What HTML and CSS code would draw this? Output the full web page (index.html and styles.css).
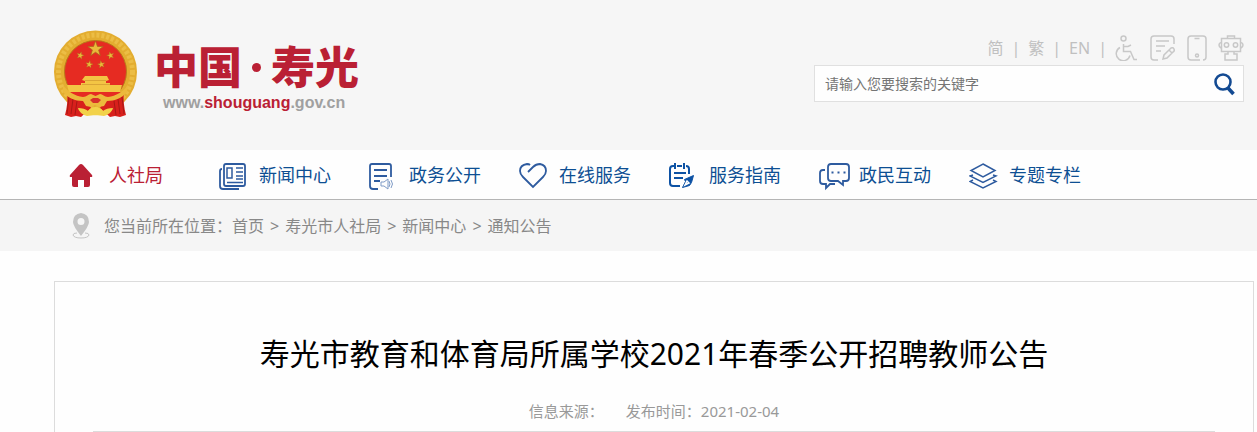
FILE: index.html
```
<!DOCTYPE html>
<html lang="zh-CN">
<head>
    <meta charset="UTF-8">
    <meta name="viewport" content="width=device-width, initial-scale=1.0">
    <title>寿光市教育和体育局所属学校2021年春季公开招聘教师公告</title>
    <link rel="stylesheet" href="styles.css">
</head>
<body>

<header class="header">
    <div class="container header-inner">
        <a href="#" class="logo">
            <svg class="emblem" viewBox="0 0 84 88" aria-hidden="true">
                <defs>
                    <path id="star" d="M0-9 2.2-2.8 8.6-2.8 3.5 1 5.3 7.3 0 3.6-5.3 7.3-3.5 1-8.6-2.8-2.2-2.8Z"/>
                </defs>
                <circle cx="41.5" cy="42" r="41.5" fill="#e3ad30"/>
                <circle cx="41.5" cy="42" r="37" fill="none" stroke="#ecbd45" stroke-width="5" stroke-dasharray="3 2"/>
                <circle cx="41.5" cy="41.5" r="31" fill="#e62b22" stroke="#b97a1a"/>
                <!-- stars -->
                <g fill="#e9b93a" stroke="#a8641c" stroke-width=".8">
                    <use href="#star" transform="translate(41.5 19) scale(.9)"/>
                    <use href="#star" transform="translate(26.3 25.5) rotate(15) scale(.44)"/>
                    <use href="#star" transform="translate(56.5 25.5) rotate(-15) scale(.44)"/>
                    <use href="#star" transform="translate(35.3 34.5) rotate(10) scale(.44)"/>
                    <use href="#star" transform="translate(47.3 34.5) rotate(-10) scale(.44)"/>
                </g>
                <!-- gate -->
                <path fill="#f3c544" d="M31 46h22l2 4-3 1v2h4v2h12l-2 7H15l-2-7h14v-2h4v-2l-3-1z"/>
                <path d="M31 50.5h21M28 54.500h28" stroke="#cf9630" stroke-width=".7"/>
                <path fill="#e62b22" d="M15 62h53l-9 9H24z"/>
                <!-- drapes -->
                <path fill="#d8201c" d="M13 61c6 5 12 8 20 9l4 8-10 9-5-1-5 1-6-2c2-7 3-15 2-24zM70 61c-6 5-12 8-20 9l-4 8 10 9 5-1 5 1 6-2c-2-7-3-15-2-24z"/>
                <path stroke="#9c1713" stroke-width=".8" fill="none" d="M15 67l-2 17M19 69l-2 15M23 71l-2 14M68 67l2 17M64 69l2 15M60 71l2 14"/>
                <!-- gear and wheat -->
                <path fill="#ecb93c" d="M9 55c5 7 12 11 20 12 4 0 5-3 8-3l4.500 2 4.500-2c3 0 4 3 8 3 8-1 15-5 20-12l-1 7c-5 6-12 9-20 9l-3 5-5 1-4-2-4 2-5-1-3-5c-8 0-15-3-20-9z"/>
                <path fill="#d6302a" d="M36 70l3-2h5l3 2-3 3h-5z"/>
                <path fill="#f2d24a" d="M24 78c4 0 8 1 10 3 2-3 5-4 7.500-4s5.500 1 7.500 4c2-2 6-3 10-3-1 4-5 7-9 8-5-1-12-1-17 0-4-1-8-4-9-8z"/>
            </svg>
            <span class="logo-text">
                <span class="logo-name">中国<i class="logo-dot"></i>寿光</span>
                <span class="logo-domain">www.<b>shouguang</b>.gov.cn</span>
            </span>
        </a>

        <div class="header-side">
            <div class="tools">
                <a href="#">简</a><span>|</span>
                <a href="#">繁</a><span>|</span>
                <a href="#">EN</a><span>|</span>
                <div class="tool-icons">
                    <a href="#" aria-label="无障碍">
                        <svg viewBox="0 0 24 26"><circle cx="8.5" cy="3.5" r="2.5"/><path d="M8.500 9v7.500h7l3.500 8h3M9 11.500h4l3-1.500M5 12.500a7 7 0 1 0 10 8"/></svg>
                    </a>
                    <a href="#" aria-label="意见征集">
                        <svg viewBox="0 0 26 26"><path d="M24 9V4q0-3-3-3H4Q1 1 1 4v18q0 3 3 3h4M6 6h13M6 11h9M6 16h5M13 24l1-4 7-7q2-1 3 1t-1 3l-6 6zM19 15l3 3"/></svg>
                    </a>
                    <a href="#" aria-label="手机版">
                        <svg viewBox="0 0 20 26"><path d="M13 25H4q-3 0-3-3V4q0-3 3-3h12q3 0 3 3v18q0 3-3 3M7.500 3.500h5"/><circle cx="10" cy="20.5" r="1.5"/></svg>
                    </a>
                    <a href="#" aria-label="智能问答">
                        <svg viewBox="0 0 26 26"><path d="M9.500 3.500V1h7v2.500M3.500 3.500h19v13h-19zM3 7.500Q1 8 1 10t2 3M23 7.500q2 .5 2 2.500t-2 3M10 17v2H7v6h12v-6h-3v-2"/><circle cx="8.500" cy="10" r="2.2"/><circle cx="17.500" cy="10" r="2.200"/></svg>
                    </a>
                </div>
            </div>
            <form class="search">
                <input type="text" aria-label="搜索" placeholder="请输入您要搜索的关键字">
                <button type="submit" aria-label="搜索">
                    <svg viewBox="0 0 22 24"><circle cx="9" cy="10" r="7.5" stroke-width="2.600"/><path d="M14 16l5.500 6" stroke-width="3.600"/></svg>
                </button>
            </form>
        </div>
    </div>
</header>

<nav class="nav">
    <div class="container nav-inner">
        <a href="#" class="nav-item active">
            <svg viewBox="0 0 32 28"><path fill="#ba2034" stroke="none" d="M12 1q1 0 2 1l9 10q1 2-1 2h-1v8q0 2-2 2h-4v-7H9v7H5q-2 0-2-2v-8H2q-2 0-1-2l9-10q1-1 2-1z"/></svg>
            <span>人社局</span>
        </a>
        <a href="#" class="nav-item">
            <svg viewBox="0 0 32 28"><path d="M5 3q0-2 2-2h17q2 0 2 2v18q0 2-2 2H7q-2 0-2-2zM3 6Q1 6 1 8v15q0 3 3 3h16"/><path stroke-width="1.500" d="M8 5h5v10H8zM17 5h7M17 9h7M17 13h7M17 16h7M8 19.500h16"/></svg>
            <span>新闻中心</span>
        </a>
        <a href="#" class="nav-item">
            <svg viewBox="0 0 32 28"><path d="M9 26H4q-3 0-3-3V3q0-2 2-2h17q2 0 2 2v11M5 7h13M5 13h13M5 18h6"/><path stroke="#7f9bc6" stroke-width="1" d="M12 19h3l4-3v10l-4-3h-3zM20 18q2 3 0 6M22 17q3 4 0 8"/></svg>
            <span>政务公开</span>
        </a>
        <a href="#" class="nav-item">
            <svg viewBox="0 0 32 28"><path d="M9 9l5-5q3-3 7-3 6 1 6 7 0 3-3 6L14 24 4 14Q1 11 1 8q0-6 7-7 2 0 3 1"/></svg>
            <span>在线服务</span>
        </a>
        <a href="#" class="nav-item">
            <svg viewBox="0 0 32 28"><g stroke="#0d52a4"><path stroke-width="2" d="M11 23H4q-3 0-3-3V6q0-3 3-3h1M8 3h5M17 3q3 0 3 3v5M6 0v6M15 0v6M5 10h12M5 15h9"/><path fill="#0d52a4" stroke-width="1" d="M24.500 12.500l-9 4 1 2-3 6 7-2 2-3z"/><path stroke="#fff" stroke-width="1.500" d="M16 22l2-4 2 2z"/></g></svg>
            <span>服务指南</span>
        </a>
        <a href="#" class="nav-item">
            <svg viewBox="0 0 32 28"><path d="M6 7H4Q1 7 1 10v8q0 3 3 3h3v4l4-4h5M12 1h15q3 0 3 3v11q0 3-3 3h-3v4l-5-4h-7q-3 0-3-3V4q0-3 3-3z"/><path d="M12.500 9.500h2M18.500 9.500h2M24.500 9.500h2"/></svg>
            <span>政民互动</span>
        </a>
        <a href="#" class="nav-item">
            <svg viewBox="0 0 32 28"><path stroke-width="1.500" d="M14 1l12 6.500-12 6.500L2 7.500zM4 12l-3 1 13 6.500L27 13l-3-1M4 17l-3 1.500L14 25l13-6.500-3-1.500"/></svg>
            <span>专题专栏</span>
        </a>
    </div>
</nav>

<div class="location">
    <div class="container location-inner">
        <svg viewBox="0 0 18 26" aria-hidden="true"><path fill="#c4c4c4" fill-rule="evenodd" d="M9 0q8 1 8 9 0 4-8 14Q1 13 1 9q0-8 8-9zm0 5a3.500 3.500 0 1 0 0 7 3.500 3.500 0 0 0 0-7z"/><path fill="none" stroke="#c4c4c4" d="M5 20q-4 0-4 2 1 3 8 3t8-3q0-2-4-2"/></svg>
        <p>您当前所在位置：<a href="#">首页</a><span>&gt;</span><a href="#">寿光市人社局</a><span>&gt;</span><a href="#">新闻中心</a><span>&gt;</span><a href="#">通知公告</a></p>
    </div>
</div>

<main class="container">
    <article class="article">
        <h1>寿光市教育和体育局所属学校2021年春季公开招聘教师公告</h1>
        <div class="meta">
            <span>信息来源：</span>
            <span>发布时间：2021-02-04</span>
        </div>
    </article>
</main>

</body>
</html>
```
FILE: styles.css
```
* {
    box-sizing: border-box;
}

body {
    margin: 0;
    font-family: "Noto Sans", "Noto Sans CJK SC", sans-serif;
    background-color: #fefefe;
}

a {
    color: inherit;
    text-decoration: none;
}

svg {
    display: block;
    flex: none;
}

.container {
    max-width: 1257px;
    margin: 0 auto;
    padding: 0 3px 0 54px;
}

/* header */
.header {
    background-color: #f6f6f6;
}

.header-inner {
    display: flex;
    justify-content: space-between;
    height: 150px;
}

.logo {
    display: flex;
    align-items: flex-start;
    gap: 16px;
    padding-top: 30px;
}

.emblem {
    width: 84px;
    height: 88px;
}

.logo-text {
    display: flex;
    flex-direction: column;
    padding-top: 10px;
}

.logo-name {
    display: flex;
    align-items: center;
    gap: 2px;
    font-size: 44px;
    line-height: 54px;
    font-weight: 900;
    color: #ba2034;
}

.logo-dot {
    width: 9px;
    height: 9px;
    margin: 0 8px;
    border-radius: 50%;
    background-color: #ba2034;
}

.logo-domain {
    padding-left: 9px;
    font-family: "Liberation Sans", Arial, sans-serif;
    font-size: 16px;
    line-height: 18px;
    font-weight: bold;
    color: #a0a0a0;
}

.logo-domain b {
    color: #ba2034;
}

.header-side {
    width: 430px;
    margin-right: 10px;
    padding-top: 31px;
}

.tools {
    display: flex;
    align-items: center;
    justify-content: flex-end;
    gap: 8px;
    height: 34px;
    font-size: 16px;
    line-height: 22px;
    color: #c0c0c0;
}

.tool-icons {
    display: flex;
    gap: 11px;
}

.tool-icons svg {
    height: 26px;
    fill: none;
    stroke: #c8c8c8;
    stroke-width: 1.5;
}

.search {
    display: flex;
    height: 37px;
    border: 1px solid #e0e0e0;
    background-color: #fefefe;
}

.search input {
    flex: 1;
    min-width: 0;
    padding: 0 10px;
    border: none;
    outline: none;
    background: none;
    font-family: inherit;
    font-size: 14px;
}

.search input::placeholder {
    color: #757575;
}

.search button {
    padding: 0 7px;
    border: none;
    background: none;
    cursor: pointer;
}

.search button svg {
    width: 22px;
    height: 24px;
    fill: none;
    stroke: #134a92;
}

/* navigation */
.nav {
    border-bottom: 1px solid #b5b5b5;
}

.nav-inner {
    display: flex;
}

.nav-item {
    display: flex;
    align-items: center;
    gap: 8px;
    width: 150px;
    height: 49px;
    padding: 4px 0 0 15px;
    font-size: 18px;
    line-height: 26px;
    white-space: nowrap;
    color: #0d4f93;
}

.nav-item span {
    padding-bottom: 4px;
}

.nav-item.active {
    color: #ba2034;
}

.nav-item svg {
    width: 32px;
    height: 28px;
    fill: none;
    stroke: #2e5b9f;
    stroke-width: 1.8;
}

/* breadcrumb */
.location {
    background-color: #f5f5f5;
}

.location-inner {
    display: flex;
    align-items: center;
    height: 51px;
}

.location svg {
    width: 18px;
    height: 26px;
    margin: 0 14px 0 18px;
}

.location p {
    margin: 0;
    font-size: 16px;
    line-height: 24px;
    color: #888;
}

.location span {
    margin: 0 6px;
}

/* article */
.article {
    margin-top: 30px;
    padding: 50px 38px 0;
    border: 1px solid #dcdcdc;
    border-bottom: none;
}

.article h1 {
    margin: 0;
    font-size: 30px;
    line-height: 44px;
    font-weight: normal;
    text-align: center;
    color: #000;
}

.meta {
    display: flex;
    justify-content: center;
    gap: 22px;
    padding: 24px 0 8px;
    border-bottom: 1px solid #dcdcdc;
    font-size: 15px;
    line-height: 23px;
    color: #999;
}
```
